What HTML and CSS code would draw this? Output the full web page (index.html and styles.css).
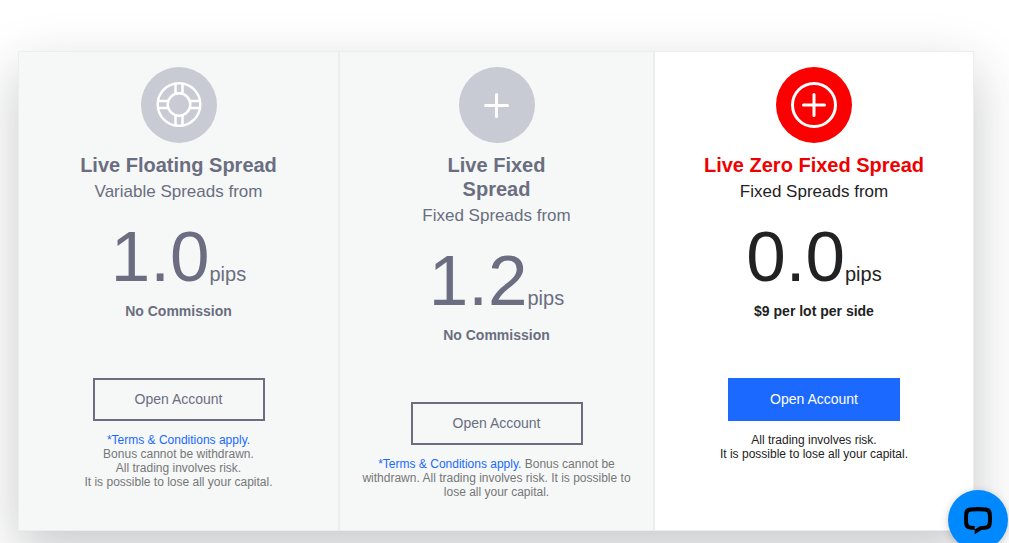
FILE: index.html
```html
<!DOCTYPE html>
<html lang="en">
<head>
    <meta charset="UTF-8">
    <meta name="viewport" content="width=device-width, initial-scale=1">
    <title>Live Accounts</title>
    <link rel="stylesheet" href="styles.css">
</head>
<body>
    <main class="accounts">
        <section class="account floating">
            <svg class="icon" viewBox="0 0 76 76" aria-hidden="true">
                <circle class="disc" cx="38" cy="38" r="38"/>
                <g class="lines">
                    <circle cx="38" cy="37.5" r="21.3"/>
                    <circle cx="38" cy="37.5" r="11.3"/>
                    <path d="M34.500 17v9.500M41.500 17v9.500M34.500 48.500v9.500M41.500 48.500v9.500M17.500 34h9.500M17.500 41h9.500M49 34h9.500M49 41h9.500"/>
                </g>
            </svg>
            <h2>Live Floating Spread</h2>
            <p class="from">Variable Spreads from</p>
            <p class="pips">1.0<span>pips</span></p>
            <p class="commission">No Commission</p>
            <a class="btn" href="#">Open Account</a>
            <p class="note">
                <a href="#">*Terms &amp; Conditions apply.</a><br>
                Bonus cannot be withdrawn.<br>
                All trading involves risk.<br>
                It is possible to lose all your capital.
            </p>
        </section>

        <section class="account fixed">
            <svg class="icon" viewBox="0 0 76 76" aria-hidden="true">
                <circle class="disc" cx="38" cy="38" r="38"/>
                <path class="lines thick" d="M37.5 27.500v22M26.500 38.500h22"/>
            </svg>
            <h2>Live Fixed<br>Spread</h2>
            <p class="from">Fixed Spreads from</p>
            <p class="pips">1.2<span>pips</span></p>
            <p class="commission">No Commission</p>
            <a class="btn" href="#">Open Account</a>
            <p class="note">
                <a href="#">*Terms &amp; Conditions apply.</a>
                Bonus cannot be withdrawn. All trading involves risk.
                It is possible to lose all your capital.
            </p>
        </section>

        <section class="account zero">
            <svg class="icon" viewBox="0 0 76 76" aria-hidden="true">
                <circle class="disc" cx="38" cy="38" r="38"/>
                <g class="lines thick">
                    <circle cx="38" cy="38" r="21.5"/>
                    <path d="M38 27.500v21M27.500 38h21"/>
                </g>
            </svg>
            <h2>Live Zero Fixed Spread</h2>
            <p class="from">Fixed Spreads from</p>
            <p class="pips">0.0<span>pips</span></p>
            <p class="commission">$9 per lot per side</p>
            <a class="btn" href="#">Open Account</a>
            <p class="note">
                All trading involves risk.<br>
                It is possible to lose all your capital.
            </p>
        </section>
    </main>

    <button class="chat" type="button" aria-label="Open chat">
        <svg viewBox="0 0 28 28" aria-hidden="true">
            <path fill-rule="evenodd" d="M6 1.500Q14 .7 22 1.500Q27 2 27.600 6.500Q28.400 12 27.600 18.500Q27 23 22.500 23.600L17.500 24L10.700 28.300V24L6 23.600Q1 23 .4 18.500Q-.4 12 .4 6.500Q1 2 6 1.500ZM7 5.500Q14 4.800 21 5.500Q23.500 5.700 23.800 8Q24.200 12.500 23.800 17Q23.500 19.500 21 19.800L16 20.200L10.700 23.400V20L7 19.800Q4.500 19.500 4.200 17Q3.800 12.500 4.200 8Q4.500 5.700 7 5.500Z"/>
        </svg>
    </button>
</body>
</html>
```

FILE: styles.css
```css
body {
    font-family: "Liberation Sans", Arial, sans-serif;
    margin: 0;
    background-color: #fff;
}
h2, p {
    margin: 0;
}
a {
    color: #1b69ff;
    text-decoration: none;
}
.accounts {
    display: grid;
    grid-template-columns: 321fr 315fr 320fr;
    margin: 51px 35px 12px 18px;
    box-shadow: 0 20px 50px rgba(34, 38, 46, 0.25);
}
.account {
    display: flex;
    flex-direction: column;
    align-items: center;
    padding: 15px 15px 31px;
    border: 1px solid #eceeed;
    background-color: #f5f8f7;
    color: #6a6e80;
    text-align: center;
}
.icon {
    width: 76px;
    height: 76px;
    margin-bottom: 10px;
}
.disc {
    fill: #c8cad4;
}
.lines {
    fill: none;
    stroke: #fff;
    stroke-width: 2.5;
    stroke-linecap: round;
}
.thick {
    stroke-width: 3;
}
h2 {
    font-size: 20px;
    line-height: 24px;
}
.from {
    font-size: 17px;
    line-height: 30px;
}
.pips {
    font-size: 71px;
    line-height: 80px;
    margin-top: 10px;
}
.pips span {
    font-size: 20px;
    line-height: 20px;
}
.commission {
    font-size: 14px;
    font-weight: bold;
    line-height: 20px;
    margin: 4px 0 57px;
}
.btn {
    box-sizing: border-box;
    width: 172px;
    border: 2px solid #6a6e80;
    color: #6a6e80;
    font-size: 14px;
    line-height: 39px;
}
.note {
    color: #777;
    font-size: 12px;
    line-height: 14px;
    margin-top: 12px;
}

.zero {
    background-color: #fff;
    color: #222;
}
.zero .disc {
    fill: #fa0000;
}
.zero h2 {
    color: #f00000;
}
.zero .btn {
    background-color: #1b69ff;
    border-color: #1b69ff;
    color: #fff;
}
.zero .note {
    color: #222;
}

.chat {
    position: fixed;
    right: 1px;
    bottom: -7px;
    display: flex;
    align-items: center;
    justify-content: center;
    width: 60px;
    height: 60px;
    padding: 0;
    border: none;
    border-radius: 50%;
    background-color: #0089ff;
    box-shadow: 0 2px 8px rgba(0, 0, 0, 0.2);
    cursor: pointer;
}
.chat svg {
    width: 28px;
    height: 28px;
}
```
